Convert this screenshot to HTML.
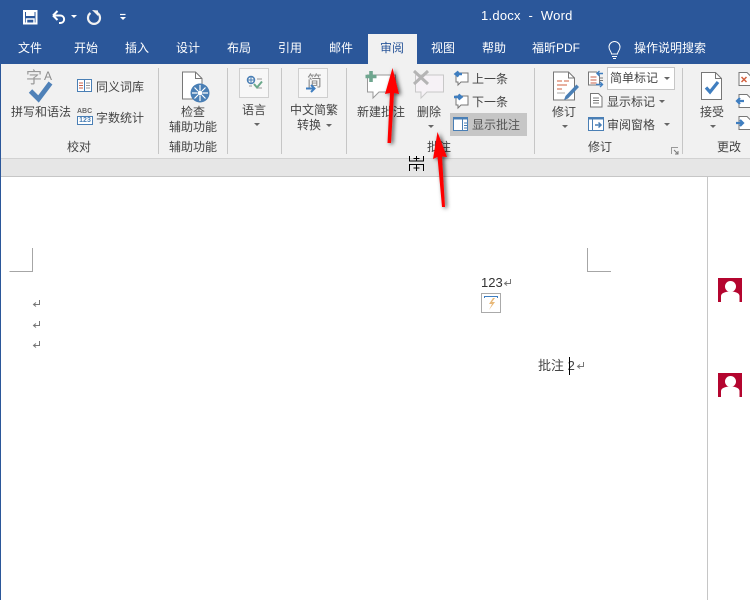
<!DOCTYPE html>
<html lang="zh"><head><meta charset="utf-8">
<style>
html,body{margin:0;padding:0}
body{width:750px;height:600px;overflow:hidden;background:#fff;position:relative;font-family:"Liberation Sans","Noto Sans CJK SC",sans-serif;font-size:12px;color:#444}
.a{position:absolute;white-space:nowrap}
.t{position:absolute;white-space:nowrap;font-size:12px;line-height:16px;color:#444;transform:translateX(-50%)}
.l{position:absolute;white-space:nowrap;font-size:12px;line-height:16px;color:#444}
.tab{position:absolute;top:39px;font-size:12px;line-height:18px;color:#fff;white-space:nowrap;transform:translateX(-50%)}
.sep{position:absolute;top:68px;height:86px;width:1px;background:#c6c6c6}
.caret{position:absolute;width:0;height:0;border-left:3px solid transparent;border-right:3px solid transparent;border-top:3px solid #666}
svg{position:absolute;overflow:visible}
</style></head><body>
<div class="a" style="left:0;top:0;width:750px;height:64px;background:#2b579a"></div>
<div class="a" style="left:0;top:64px;width:750px;height:94px;background:#f1f1f1"></div>
<div class="a" style="left:0;top:158px;width:750px;height:19px;background:#e6e6e6;border-top:1px solid #d2d2d2;border-bottom:1px solid #c6c6c6;box-sizing:border-box"></div>
<div class="a" style="left:0;top:64px;width:1px;height:536px;background:#2b579a"></div>
<div class="a" style="left:707px;top:177px;width:1px;height:423px;background:#c6c6c6"></div>

<svg style="left:0;top:0" width="150" height="30" fill="none">
<path d="M24 11h12.500v12.500H24z" stroke="#fff" stroke-width="2"/>
<path d="M26 11.500h8.500v4.500H26z" fill="#fff"/>
<path d="M26.500 23.500v-4.500h7.500v4.500" stroke="#fff" stroke-width="1.500"/>
<path d="M53 15.500l4.500-4.500M53 15.500l4.500 4.500M53.500 15.500h6.500c5.500 0 5.500 7.500 0 7.500h-1" stroke="#fff" stroke-width="2"/>
<path d="M71 15h6l-3 3z" fill="#fff"/>
<path d="M90.500 13a6 6 0 1 0 7 0" stroke="#f2f2f2" stroke-width="2.200"/>
<path d="M92 10l6 .5v5.500z" fill="#f2f2f2"/>
<path d="M120 14.500h5.500" stroke="#fff" stroke-width="1.200"/>
<path d="M120 17h6l-3 3z" fill="#fff"/>
</svg>
<div class="a" style="left:481px;top:7px;font-size:13px;line-height:18px;color:#fff;letter-spacing:.25px">1.docx&nbsp; -&nbsp; Word</div>

<div class="tab" style="left:30px">文件</div>
<div class="tab" style="left:86px">开始</div>
<div class="tab" style="left:137px">插入</div>
<div class="tab" style="left:188px">设计</div>
<div class="tab" style="left:239px">布局</div>
<div class="tab" style="left:290px">引用</div>
<div class="tab" style="left:341px">邮件</div>
<div class="a" style="left:368px;top:34px;width:49px;height:30px;background:#f1f1f1"></div>
<div class="tab" style="left:392px;color:#2b579a">审阅</div>
<div class="tab" style="left:443px">视图</div>
<div class="tab" style="left:494px">帮助</div>
<div class="tab" style="left:556px">福昕PDF</div>
<svg style="left:608px;top:40px" width="20" height="20" fill="none"><path d="M3.500 14c0-2.500-2.500-3.500-2.500-7a5.500 5.500 0 0 1 11 0c0 3.500-2.500 4.500-2.500 7zM4 16.500h5M5 18.500h3" stroke="#fff" stroke-width="1"/></svg>
<div class="tab" style="left:670px">操作说明搜索</div>

<div class="sep" style="left:158px"></div>
<div class="sep" style="left:227px"></div>
<div class="sep" style="left:281px"></div>
<div class="sep" style="left:346px"></div>
<div class="sep" style="left:534px"></div>
<div class="sep" style="left:682px"></div>

<div class="a" style="left:26px;top:70px;font-size:16px;line-height:18px;color:#999">字</div>
<div class="a" style="left:44px;top:69px;font-size:12px;line-height:14px;color:#8c8c8c">A</div>
<svg style="left:27px;top:80px" width="26" height="24" fill="none"><path d="M3.500 11l8 8 12-16" stroke="#4f81b8" stroke-width="4.800"/></svg>
<div class="t" style="left:41px;top:104px">拼写和语法</div>
<svg style="left:77px;top:79px" width="16" height="14" fill="none"><rect x=".5" y=".5" width="14" height="12" fill="#fff" stroke="#4a7fb5"/><path d="M7.500 1v11" stroke="#4a7fb5"/><path d="M2 4h4M2 6.500h4M2 9h4" stroke="#c9614a"/><path d="M9 4h4M9 6.500h4M9 9h4" stroke="#999"/></svg>
<div class="l" style="left:96px;top:79px">同义词库</div>
<div class="a" style="left:77px;top:108px;font-size:7px;line-height:8px;font-weight:bold;color:#666">ABC</div>
<div class="a" style="left:77px;top:116px;width:14px;height:7px;border:1px solid #4a7fb5;font-size:7px;line-height:7px;font-weight:bold;color:#4a7fb5;text-align:center;background:#fff">123</div>
<div class="l" style="left:96px;top:110px">字数统计</div>
<div class="t" style="left:79px;top:139px">校对</div>

<svg style="left:181px;top:71px" width="30" height="34" fill="none"><path d="M1.500 1h13l6.500 6.500V28H1.500z" fill="#fff" stroke="#777"/><path d="M14.500 1v6.500H21" stroke="#777"/><circle cx="19" cy="22" r="9.500" fill="#4a7fb5"/><circle cx="19" cy="22" r="2.500" fill="#fff"/><path d="M19 14v5M19 25v5M11 22h5M22 22h5M13.500 16.500l3.500 3.500M24.500 16.500l-3.500 3.500M13.500 27.500l3.500-3.500M24.500 27.500l-3.500-3.500" stroke="#fff" stroke-width="1.200"/></svg>
<div class="t" style="left:193px;top:104px">检查</div>
<div class="t" style="left:193px;top:119px">辅助功能</div>
<div class="t" style="left:193px;top:139px">辅助功能</div>

<div class="a" style="left:239px;top:68px;width:28px;height:28px;border:1px solid #cfcfcf;background:#f7f7f7"></div>
<svg style="left:246px;top:75px" width="18" height="16" fill="none"><circle cx="5" cy="5" r="3.500" stroke="#4a7fb5" stroke-width="1.500"/><path d="M1 5h8M5 1v8" stroke="#4a7fb5"/><path d="M11 4h5M3 11h3M11 13h5" stroke="#999"/><path d="M8 9l3 3.500 5-6" stroke="#6aa88a" stroke-width="2"/></svg>
<div class="t" style="left:254px;top:102px">语言</div>
<div class="caret" style="left:254px;top:123px"></div>

<div class="a" style="left:298px;top:68px;width:28px;height:28px;border:1px solid #cfcfcf;background:#f7f7f7"></div>
<div class="a" style="left:307px;top:73px;font-size:15px;line-height:18px;color:#888">简</div>
<svg style="left:306px;top:84px" width="10" height="9" fill="none"><path d="M0 4.500h8M5 1l3.500 3.500L5 8" stroke="#3f7ec0" stroke-width="2"/></svg>
<div class="t" style="left:314px;top:102px">中文简繁</div>
<div class="t" style="left:309px;top:117px">转换</div>
<div class="caret" style="left:326px;top:124px"></div>

<svg style="left:365px;top:70px" width="34" height="30" fill="none"><path d="M2.500 5h28v17H14l-6 6v-6H2.500z" fill="#fff" stroke="#999"/><path d="M6 1v11M.5 6.500h11" stroke="#6fa68f" stroke-width="3.600"/></svg>
<div class="t" style="left:381px;top:104px">新建批注</div>
<svg style="left:413px;top:70px" width="34" height="30" fill="none"><path d="M2.500 5h28v17H14l-6 6v-6H2.500z" fill="#f6f2f6" stroke="#c8c8c8"/><path d="M1 1l14 13M15 1L1 14" stroke="#b4b4b4" stroke-width="3"/></svg>
<div class="t" style="left:429px;top:104px">删除</div>
<div class="caret" style="left:428px;top:125px"></div>
<div class="t" style="left:439px;top:139px">批注</div>

<svg style="left:453px;top:70px" width="16" height="16" fill="none"><path d="M3 3h12v9H8l-3 3v-3H3z" fill="#fff" stroke="#777"/><path d="M9 4H3M5.500 1.500L2.500 4l3 2.500" stroke="#3f7ec0" stroke-width="2.400"/></svg>
<div class="l" style="left:472px;top:71px">上一条</div>
<svg style="left:453px;top:93px" width="16" height="16" fill="none"><path d="M3 3h12v9H8l-3 3v-3H3z" fill="#fff" stroke="#777"/><path d="M1 4h7M5.500 1.500L8.500 4l-3 2.500" stroke="#3f7ec0" stroke-width="2.400"/></svg>
<div class="l" style="left:472px;top:94px">下一条</div>
<div class="a" style="left:450px;top:113px;width:77px;height:23px;background:#c6c6c6"></div>
<svg style="left:453px;top:117px" width="16" height="15" fill="none"><rect x=".5" y=".5" width="14" height="13" fill="#fff" stroke="#4a7fb5"/><path d="M0 1.500h15" stroke="#4a7fb5" stroke-width="2"/><path d="M9.500 2v12" stroke="#4a7fb5"/><path d="M11 6h3M11 8.500h3M11 11h3" stroke="#4a7fb5"/></svg>
<div class="l" style="left:472px;top:117px;color:#555">显示批注</div>

<svg style="left:553px;top:71px" width="30" height="34" fill="none"><path d="M.5 1h15l6 6v22H.5z" fill="#fff" stroke="#777"/><path d="M15.500 1v6h6" stroke="#777"/><path d="M4 10h5M11 10h5M4 14h10M4 18h5" stroke="#d2603f"/><path d="M4 22h8" stroke="#aaa"/><path d="M11 29l1.500-4 11-11.500 2.500 2.500L15 27.500z" fill="#4a7fb5"/></svg>
<div class="t" style="left:564px;top:104px">修订</div>
<div class="caret" style="left:562px;top:125px"></div>
<div class="t" style="left:600px;top:139px">修订</div>
<svg style="left:671px;top:147px" width="8" height="8" fill="none"><path d="M.5 7V.5H7" stroke="#999"/><path d="M3 3l4 4M7 4v3H4" stroke="#777"/></svg>

<svg style="left:588px;top:70px" width="16" height="18" fill="none"><path d="M.5 2h8l3 3v10H.5z" fill="#fff" stroke="#777"/><path d="M2.500 7h6M2.500 10h6M2.500 13h6" stroke="#c9614a"/><path d="M9 3.500h6M11.500 1l-2.500 2.500 2.500 2.500M15 14.500H8M12 12l2.500 2.500-2.500 2.500" stroke="#3f7ec0" stroke-width="1.400"/><path d="M12 8h3M12 10.500h3" stroke="#777"/></svg>
<div class="a" style="left:607px;top:67px;width:66px;height:21px;border:1px solid #c6c6c6;background:#fff"></div>
<div class="l" style="left:610px;top:70px">简单标记</div>
<div class="caret" style="left:664px;top:77px"></div>
<svg style="left:590px;top:93px" width="13" height="15" fill="none"><path d="M.5.500h8l3.500 3.500v10H.500z" fill="#fff" stroke="#777"/><path d="M3 5h6M3 7.500h6M3 10h6" stroke="#777"/></svg>
<div class="l" style="left:607px;top:94px">显示标记</div>
<div class="caret" style="left:659px;top:100px"></div>
<svg style="left:588px;top:117px" width="16" height="15" fill="none"><rect x=".5" y=".5" width="15" height="13" fill="#fff" stroke="#4a7fb5"/><path d="M0 1.500h16" stroke="#4a7fb5" stroke-width="2"/><path d="M4.500 2v12" stroke="#4a7fb5"/><path d="M7 8h6M10.500 5.500L13 8l-2.500 2.500" stroke="#4a7fb5" stroke-width="1.500"/></svg>
<div class="l" style="left:607px;top:117px">审阅窗格</div>
<div class="caret" style="left:664px;top:123px"></div>

<svg style="left:701px;top:72px" width="22" height="30" fill="none"><path d="M.5.500h14l6 6v21H.5z" fill="#fff" stroke="#777"/><path d="M14.500.5v6h6" stroke="#777"/><path d="M5 15.500l4 4.500 8-10" stroke="#3f7ec0" stroke-width="3.200"/></svg>
<div class="t" style="left:712px;top:104px">接受</div>
<div class="caret" style="left:710px;top:125px"></div>
<div class="t" style="left:729px;top:139px">更改</div>
<svg style="left:736px;top:70px" width="14" height="64" fill="none"><path d="M3 2.500h8l4 4v9H3z" fill="#fff" stroke="#777"/><path d="M5.500 7l5 5M10.500 7l-5 5" stroke="#d2603f" stroke-width="1.500"/><path d="M3 24.500h8l4 4v9H3zM3 46.500h8l4 4v9H3z" fill="#fff" stroke="#777"/><path d="M1 31h7M4 28l-3 3 3 3" stroke="#3f7ec0" stroke-width="2.200"/><path d="M0 53h7M4 50l3 3-3 3" stroke="#3f7ec0" stroke-width="2.200"/></svg>

<svg style="left:409px;top:156px" width="16" height="16" fill="none"><path d="M.5 0v5h14V0M.5 15V8.500h14V15" stroke="#000"/><path d="M4.500 2.500h6M7.500 0v5M4.500 12h6M7.500 9v6" stroke="#000"/></svg>

<svg style="left:0;top:240px" width="750" height="40" fill="none"><path d="M9.500 31.500h23V8M587.500 8v23.500H611" stroke="#a6a6a6"/></svg>
<svg style="left:32px;top:299px" width="10" height="50" fill="none"><path d="M7.500 1v4.500H2M4 3.500L1.500 5.500 4 7.500" stroke="#777"/><path d="M7.500 22v4.500H2M4 24.500L1.500 26.500 4 28.500" stroke="#777"/><path d="M7.500 42v4.500H2M4 44.500L1.500 46.500 4 48.500" stroke="#777"/></svg>
<div class="a" style="left:481px;top:275px;font-size:13px;line-height:16px;color:#333">123</div>
<svg style="left:503px;top:278px" width="10" height="9" fill="none"><path d="M7.500 1v4.500H2M4 3.500L1.500 5.500 4 7.500" stroke="#777"/></svg>
<svg style="left:481px;top:293px" width="20" height="20" fill="none"><rect x=".5" y=".5" width="19" height="19" fill="#fff" stroke="#aaa"/><path d="M3.500 5V3.500h13V5" stroke="#3f7ec0"/><path d="M12 5l-4 6h3l-3 6 6-8h-3l3-4z" fill="#e8b878"/></svg>
<div class="a" style="left:538px;top:357px;font-size:13px;line-height:18px;color:#444">批注 2</div>
<div class="a" style="left:569px;top:357px;width:1px;height:18px;background:#000"></div>
<svg style="left:576px;top:361px" width="10" height="9" fill="none"><path d="M7.500 1v4.500H2M4 3.500L1.500 5.500 4 7.500" stroke="#777"/></svg>

<svg style="left:718px;top:278px" width="24" height="24"><rect width="24" height="24" fill="#b4052f"/><circle cx="12.500" cy="8.500" r="5.500" fill="#fff"/><path d="M3 24v-6c0-3 5-4.500 9.500-4.500s9 1.500 9 4.500v6z" fill="#fff"/></svg>
<svg style="left:718px;top:373px" width="24" height="24"><rect width="24" height="24" fill="#b4052f"/><circle cx="12.500" cy="8.500" r="5.500" fill="#fff"/><path d="M3 24v-6c0-3 5-4.500 9.500-4.500s9 1.500 9 4.500v6z" fill="#fff"/></svg>

<svg style="left:0;top:0" width="750" height="600"><defs><filter id="s" x="-100%" y="-10%" width="300%" height="120%"><feDropShadow dx="2" dy="1" stdDeviation="2" flood-color="#000" flood-opacity=".7"/></filter></defs>
<path d="M387.500 143L390 93 385 94 392.500 68 399 94 394 93 391 143z" fill="#f00" filter="url(#s)"/>
<path d="M442 207L437.500 157 433 159 437.500 132 447 157 442 156.500 445 207z" fill="#f00" filter="url(#s)"/>
</svg>
</body></html>
